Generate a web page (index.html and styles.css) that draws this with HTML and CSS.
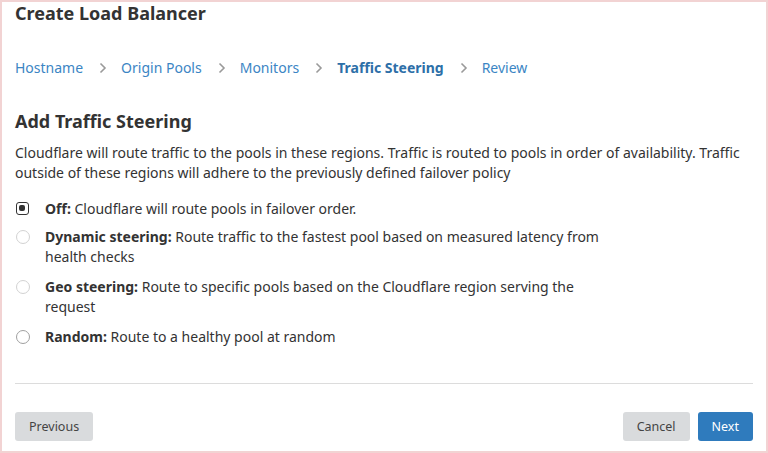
FILE: index.html
```html
<!DOCTYPE html>
<html>
<head>
<meta charset="utf-8">
<link rel="stylesheet" href="styles.css">
</head>
<body>
<div class="frame">
  <h1 class="title">Create Load Balancer</h1>
  <nav class="crumbs">
    <span class="crumb">Hostname</span>
    <span class="sep"><svg width="8" height="12" viewBox="0 0 8 12"><path d="M1.5 1.5 L6 6 L1.5 10.5" fill="none" stroke="#9a9a9a" stroke-width="1.6"/></svg></span>
    <span class="crumb">Origin Pools</span>
    <span class="sep"><svg width="8" height="12" viewBox="0 0 8 12"><path d="M1.5 1.5 L6 6 L1.5 10.5" fill="none" stroke="#9a9a9a" stroke-width="1.6"/></svg></span>
    <span class="crumb">Monitors</span>
    <span class="sep"><svg width="8" height="12" viewBox="0 0 8 12"><path d="M1.5 1.5 L6 6 L1.5 10.5" fill="none" stroke="#9a9a9a" stroke-width="1.6"/></svg></span>
    <span class="crumb active">Traffic Steering</span>
    <span class="sep"><svg width="8" height="12" viewBox="0 0 8 12"><path d="M1.5 1.5 L6 6 L1.5 10.5" fill="none" stroke="#9a9a9a" stroke-width="1.6"/></svg></span>
    <span class="crumb">Review</span>
  </nav>
  <h2 class="heading">Add Traffic Steering</h2>
  <p class="desc">Cloudflare will route traffic to the pools in these regions. Traffic is routed to pools in order of availability. Traffic outside of these regions will adhere to the previously defined failover policy</p>
  <div class="options">
    <label class="option first"><span class="radio checked"></span><span class="otext"><b>Off:</b> Cloudflare will route pools in failover order.</span></label>
    <label class="option"><span class="radio"></span><span class="otext"><b>Dynamic steering:</b> Route traffic to the fastest pool based on measured latency from health checks</span></label>
    <label class="option"><span class="radio"></span><span class="otext"><b>Geo steering:</b> Route to specific pools based on the Cloudflare region serving the request</span></label>
    <label class="option"><span class="radio strong"></span><span class="otext"><b>Random:</b> Route to a healthy pool at random</span></label>
  </div>
  <hr class="rule">
  <div class="actions">
    <button class="btn grey">Previous</button>
    <div class="right">
      <button class="btn grey">Cancel</button>
      <button class="btn blue">Next</button>
    </div>
  </div>
</div>
</body>
</html>
```
FILE: styles.css
```css
html, body {
  margin: 0;
  padding: 0;
  height: 100%;
}
body {
  font-family: "Noto Sans", "Open Sans", sans-serif;
  color: #333;
  background: #fff;
}
.frame {
  box-sizing: border-box;
  width: 768px;
  height: 453px;
  border: 2px solid #f2d3d3;
  padding: 0 13px;
  display: flex;
  flex-direction: column;
}
.title {
  margin: -1px 0 0;
  font-size: 18px;
  line-height: 24px;
  font-weight: 700;
  color: #333;
}
.crumbs {
  margin-top: 33px;
  display: flex;
  align-items: center;
  font-size: 14px;
  line-height: 20px;
}
.crumb {
  color: #3b85c4;
}
.crumb.active {
  font-weight: 700;
  color: #2d6fa8;
}
.sep {
  display: flex;
  align-items: center;
  margin: 0 14px 0 16px;
}
.heading {
  margin: 31px 0 0;
  font-size: 18px;
  line-height: 24px;
  font-weight: 700;
  color: #333;
}
.desc {
  margin: 10px 0 0;
  font-size: 14px;
  line-height: 20px;
  color: #333;
}
.options {
  margin-top: 16px;
  display: flex;
  flex-direction: column;
  gap: 10px;
}
.option {
  display: flex;
  align-items: flex-start;
  font-size: 14px;
  line-height: 20px;
}
.option.first {
  margin-bottom: -2px;
}
.otext {
  width: 560px;
}
.otext b {
  font-weight: 700;
}
.radio {
  box-sizing: border-box;
  width: 14px;
  height: 14px;
  margin: 3px 15px 0 1px;
  border: 1px solid #d2d2d2;
  border-radius: 50%;
  flex: none;
  background: #fff;
}
.radio.strong {
  border-color: #a0a0a0;
}
.radio.checked {
  width: 13px;
  height: 13px;
  margin-right: 16px;
  border: 1.5px solid #333;
  border-radius: 3px;
  position: relative;
}
.radio.checked::after {
  content: "";
  position: absolute;
  left: 2px;
  top: 2px;
  width: 6px;
  height: 6px;
  border-radius: 2px;
  background: #333;
}
.rule {
  margin: 36px 0 0;
  border: 0;
  border-top: 1px solid #dcdcdc;
}
.actions {
  margin-top: 28px;
  display: flex;
  justify-content: space-between;
}
.right {
  display: flex;
  gap: 8px;
}
.btn {
  font-family: inherit;
  font-size: 12.5px;
  height: 29px;
  padding: 0 14px;
  border: 0;
  border-radius: 3px;
  cursor: pointer;
}
.btn.grey {
  background: #d9dbdd;
  color: #444;
}
.btn.blue {
  background: #2f7bbd;
  color: #fff;
}
```
